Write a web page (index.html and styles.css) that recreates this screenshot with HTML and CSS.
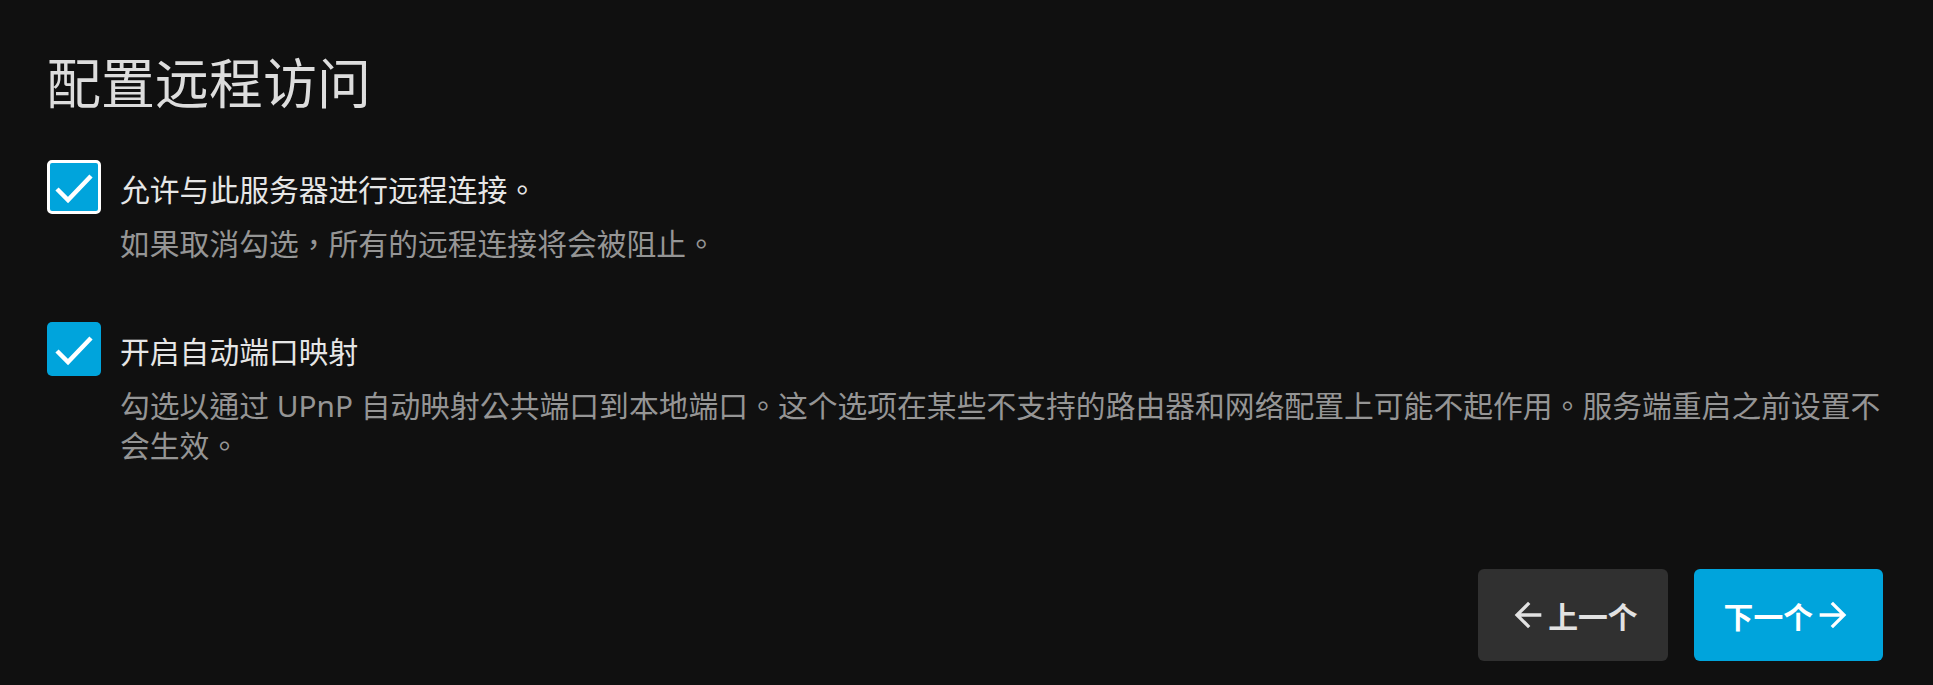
FILE: index.html
```html
<!DOCTYPE html>
<html lang="zh-TW">
<head>
    <meta charset="UTF-8">
    <meta name="viewport" content="width=device-width, initial-scale=1.0">
    <title>配置远程访问</title>
    <link rel="stylesheet" href="styles.css">
</head>
<body>
    <main class="page">
        <h1 class="page-title">配置远程访问</h1>

        <div class="checkbox-container">
            <label class="checkbox-row">
                <span class="checkbox checkbox-focused">
                    <svg viewBox="0 0 54 54" width="54" height="54"><polyline points="10,29 21,40 44,16"/></svg>
                </span>
                <span class="checkbox-label">允许与此服务器进行远程连接。</span>
            </label>
            <div class="field-description">如果取消勾选，所有的远程连接将会被阻止。</div>
        </div>

        <div class="checkbox-container">
            <label class="checkbox-row">
                <span class="checkbox">
                    <svg viewBox="0 0 54 54" width="54" height="54"><polyline points="10,29 21,40 44,16"/></svg>
                </span>
                <span class="checkbox-label">开启自动端口映射</span>
            </label>
            <div class="field-description">勾选以通过 UPnP 自动映射公共端口到本地端口。这个选项在某些不支持的路由器和网络配置上可能不起作用。服务端重启之前设置不会生效。</div>
        </div>

        <div class="wizard-buttons">
            <button type="button" class="button button-raised">
                <svg class="button-icon" viewBox="0 0 24 24"><path d="M20 11H7.83l5.59-5.59L12 4l-8 8 8 8 1.41-1.41L7.83 13H20v-2z"/></svg>
                <span>上一个</span>
            </button>
            <button type="button" class="button button-submit">
                <span>下一个</span>
                <svg class="button-icon" viewBox="0 0 24 24"><path d="M12 4l-1.41 1.41L16.17 11H4v2h12.17l-5.58 5.59L12 20l8-8z"/></svg>
            </button>
        </div>
    </main>
</body>
</html>
```

FILE: styles.css
```css
body {
    margin: 0;
    background-color: #101010;
    color: #e0e0e0;
    font-family: "Noto Sans", "Noto Sans CJK TC", sans-serif;
}

.page {
    padding: 51px 50px 0 47px;
}

.page-title {
    margin: 0 0 45px;
    font-size: 54px;
    line-height: 64px;
    font-weight: 400;
    color: #dddddd;
}

.checkbox-container {
    margin-bottom: 58px;
}

.checkbox-row {
    display: flex;
    align-items: center;
    gap: 19px;
    cursor: pointer;
}

.checkbox {
    width: 54px;
    height: 54px;
    box-sizing: border-box;
    border-radius: 5px;
    background-color: #00a4dc;
    display: flex;
    align-items: center;
    justify-content: center;
    flex-shrink: 0;
}

.checkbox-focused {
    border: 3px solid #ffffff;
}

.checkbox svg {
    display: block;
    flex-shrink: 0;
}

.checkbox polyline {
    fill: none;
    stroke: #ffffff;
    stroke-width: 4.5;
}

.checkbox-label {
    font-size: 29.8px;
    line-height: 40px;
    margin-top: 5px;
    color: #e6e6e6;
}

.field-description {
    margin: 10px 0 0 73px;
    font-size: 29.8px;
    line-height: 40px;
    color: #959595;
}

/* margin collapses with the last container's bottom margin */
.wizard-buttons {
    display: flex;
    justify-content: flex-end;
    gap: 26px;
    margin-top: 103px;
}

.button {
    display: inline-flex;
    align-items: center;
    height: 92px;
    padding: 0 30px;
    border: none;
    border-radius: 6px;
    font-family: inherit;
    font-size: 29.8px;
    font-weight: 700;
    cursor: pointer;
}

.button-raised {
    background-color: #303030;
    color: #e2e2e2;
}

.button-submit {
    background-color: #00a4dc;
    color: #ffffff;
}

.button-icon {
    width: 40px;
    height: 40px;
    fill: currentColor;
}
```
